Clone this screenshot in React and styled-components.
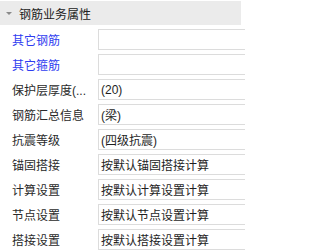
import React from "react";
import styled, { createGlobalStyle } from "styled-components";

const Global = createGlobalStyle`
  html, body {
    margin: 0;
    padding: 0;
    background: #ffffff;
    overflow: hidden;
  }
  body {
    font-family: "Liberation Sans", "Noto Sans CJK SC", sans-serif;
    font-size: 12px;
  }
`;

const Panel = styled.div`
  width: 241px;
  padding-top: 1px;
`;

const Header = styled.div`
  height: 24px;
  background: #ebebeb;
  display: flex;
  align-items: center;
  padding-left: 6px;
  gap: 7px;
  color: #222;
`;

const Caret = styled.span`
  width: 0;
  height: 0;
  border-left: 3px solid transparent;
  border-right: 3px solid transparent;
  border-top: 3px solid #8a8a8a;
  margin-top: 1px;
`;

const Rows = styled.div`
  padding-top: 2px;
`;

const Row = styled.div`
  height: 25px;
  display: grid;
  grid-template-columns: 98px 1fr;
  align-items: center;
`;

const Label = styled.div`
  padding-left: 12px;
  color: ${(p) => (p.$link ? "#2f3df0" : "#2a2a2a")};
  white-space: nowrap;
  overflow: hidden;
`;

const Value = styled.div`
  height: 19px;
  border: 1px solid #dcdcdc;
  border-right: none;
  margin-right: -4px;
  padding-left: 2px;
  display: flex;
  align-items: center;
  color: #1e1e1e;
  white-space: nowrap;
`;

const items = [
  { label: "其它钢筋", value: "", link: true },
  { label: "其它箍筋", value: "", link: true },
  { label: "保护层厚度(...", value: "(20)" },
  { label: "钢筋汇总信息", value: "(梁)" },
  { label: "抗震等级", value: "(四级抗震)" },
  { label: "锚固搭接", value: "按默认锚固搭接计算" },
  { label: "计算设置", value: "按默认计算设置计算" },
  { label: "节点设置", value: "按默认节点设置计算" },
  { label: "搭接设置", value: "按默认搭接设置计算" },
];

export default function App() {
  return (
    <Panel>
      <Global />
      <Header>
        <Caret />
        <span>钢筋业务属性</span>
      </Header>
      <Rows>
        {items.map((it) => (
          <Row key={it.label}>
            <Label $link={it.link}>{it.label}</Label>
            <Value>{it.value}</Value>
          </Row>
        ))}
      </Rows>
    </Panel>
  );
}
